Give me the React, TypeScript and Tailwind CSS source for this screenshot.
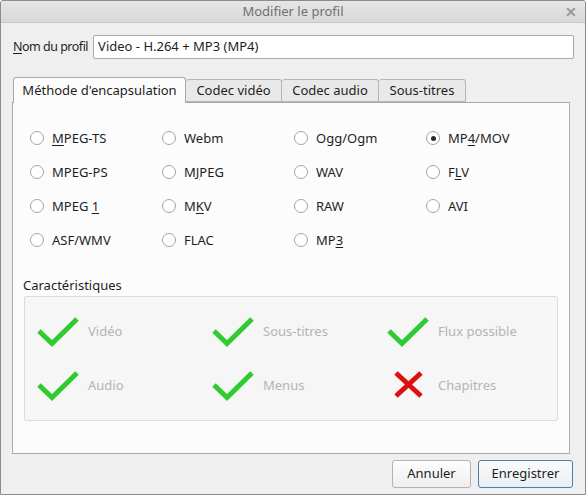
import React from 'react';

type Fmt = { label: string; key?: number; checked?: boolean };

// Container formats, laid out row by row (4 per row). `key` is the index of the mnemonic letter.
const formats: Fmt[] = [
  { label: 'MPEG-TS', key: 0 },
  { label: 'Webm' },
  { label: 'Ogg/Ogm' },
  { label: 'MP4/MOV', key: 2, checked: true },
  { label: 'MPEG-PS' },
  { label: 'MJPEG', key: 1 },
  { label: 'WAV' },
  { label: 'FLV', key: 1 },
  { label: 'MPEG 1', key: 5 },
  { label: 'MKV', key: 1 },
  { label: 'RAW' },
  { label: 'AVI' },
  { label: 'ASF/WMV' },
  { label: 'FLAC' },
  { label: 'MP3', key: 2 },
];

const features: { label: string; ok: boolean }[] = [
  { label: 'Vidéo', ok: true },
  { label: 'Sous-titres', ok: true },
  { label: 'Flux possible', ok: true },
  { label: 'Audio', ok: true },
  { label: 'Menus', ok: true },
  { label: 'Chapitres', ok: false },
];

const tabs = [
  { label: 'Méthode d\'encapsulation', w: 'w-[173px]' },
  { label: 'Codec vidéo', w: 'w-[96px]' },
  { label: 'Codec audio', w: 'w-[97px]' },
  { label: 'Sous-titres', w: 'w-[87px]' },
];

function Mnemonic({ text, at }: { text: string; at?: number }) {
  if (at === undefined) return <>{text}</>;
  return (
    <>
      {text.slice(0, at)}
      <span className="underline underline-offset-2">{text[at]}</span>
      {text.slice(at + 1)}
    </>
  );
}

function Radio({ checked }: { checked?: boolean }) {
  return (
    <span className="w-[14px] h-[14px] rounded-full border border-[#a4a4a4] bg-white flex items-center justify-center shrink-0">
      {checked && <span className="w-[5px] h-[5px] rounded-full bg-[#2a2a2a]" />}
    </span>
  );
}

function CheckIcon() {
  return (
    <svg width="44" height="32" viewBox="0 0 44 32" className="shrink-0">
      <polyline points="3,16 16,28.5 41,4" fill="none" stroke="#2ecc2e" strokeWidth="5" strokeLinejoin="miter" />
    </svg>
  );
}

function CrossIcon() {
  return (
    <svg width="44" height="32" viewBox="0 0 44 32" className="shrink-0">
      <path d="M10 4 L35 27 M35 4 L10 27" fill="none" stroke="#dd1010" strokeWidth="5" />
    </svg>
  );
}

export default function App() {
  return (
    <div className="w-[586px] h-[495px] bg-[#efefef] border border-[#8c8c8c] rounded-t-[3px] flex flex-col font-['Noto_Sans',sans-serif] text-[13px] text-[#1e1e1e] overflow-hidden">
      {/* title bar */}
      <div className="h-[22px] shrink-0 bg-gradient-to-b from-[#e6e6e6] to-[#d8d8d8] border-b border-[#c9c9c9] flex items-center relative">
        <span className="flex-1 text-center text-[#707070] text-[13px] leading-none">Modifier le profil</span>
        <span className="absolute right-[8px] top-[4px] text-[#9a9a9a] text-[14px] font-bold leading-none">✕</span>
      </div>

      <div className="flex-1 flex flex-col px-[11px] pt-[12px] pb-[6px]">
        {/* profile name */}
        <div className="flex items-center gap-[5px] h-[24px]">
          <span className="pl-[1px] text-[12.5px] tracking-[-0.5px]">
            <Mnemonic text="Nom du profil" at={0} />
          </span>
          <div className="flex-1 h-[24px] bg-white border border-[#a9a9a9] rounded-[2px] flex items-center px-[4px]">
            Video - H.264 + MP3 (MP4)
          </div>
        </div>

        {/* tab strip */}
        <div className="mt-[17px] flex items-end h-[26px] pl-[1px] pr-[4px]">
          {tabs.map((t, i) =>
            i === 0 ? (
              <div
                key={t.label}
                className={`${t.w} h-[26px] bg-[#fcfcfc] border border-b-0 border-[#aaaaaa] rounded-t-[3px] flex items-center justify-center whitespace-nowrap relative z-10 -mb-px`}
              >
                {t.label}
              </div>
            ) : (
              <div
                key={t.label}
                className={`${t.w} h-[23px] bg-[#e9e9e9] border border-l-0 border-[#b4b4b4] rounded-t-[3px] flex items-center justify-center whitespace-nowrap`}
              >
                {t.label}
              </div>
            ),
          )}
        </div>

        {/* tab pane */}
        <div className="mr-[4px] h-[352px] bg-[#fcfcfc] border border-[#aaaaaa] flex flex-col px-[17px] pt-[28px]">
          <div className="grid grid-cols-[132px_132px_132px_132px] gap-y-[20px]">
            {formats.map((f) => (
              <label key={f.label} className="flex items-center gap-[8px] h-[14px]">
                <Radio checked={f.checked} />
                <span className="leading-none">
                  <Mnemonic text={f.label} at={f.key} />
                </span>
              </label>
            ))}
          </div>

          <div className="mt-[32px] -ml-[7px] mr-[-6px]">
            <div className="leading-none mb-[4px]">Caractéristiques</div>
            <div className="h-[125px] ml-[1px] bg-[#f6f6f6] border border-[#dcdcdc] rounded-[2px] grid grid-cols-[175px_175px_175px] grid-rows-[32px_32px] gap-y-[22px] pt-[18px] pl-[11px]">
              {features.map((f) => (
                <div key={f.label} className="flex items-center gap-[8px]">
                  {f.ok ? <CheckIcon /> : <CrossIcon />}
                  <span className="text-[#b4b4b4] leading-none">{f.label}</span>
                </div>
              ))}
            </div>
          </div>
        </div>

        {/* dialog buttons */}
        <div className="mt-[6px] mr-[1px] flex justify-end gap-[7px]">
          <button className="w-[79px] h-[28px] rounded-[3px] border border-[#b3b3b3] bg-gradient-to-b from-[#fdfdfd] to-[#efefef] text-[#1e1e1e]">
            Annuler
          </button>
          <button className="w-[95px] h-[28px] rounded-[3px] border border-[#4d7fad] bg-gradient-to-b from-[#fbfbfb] to-[#e9eef3] text-[#1e1e1e]">
            Enregistrer
          </button>
        </div>
      </div>
    </div>
  );
}
